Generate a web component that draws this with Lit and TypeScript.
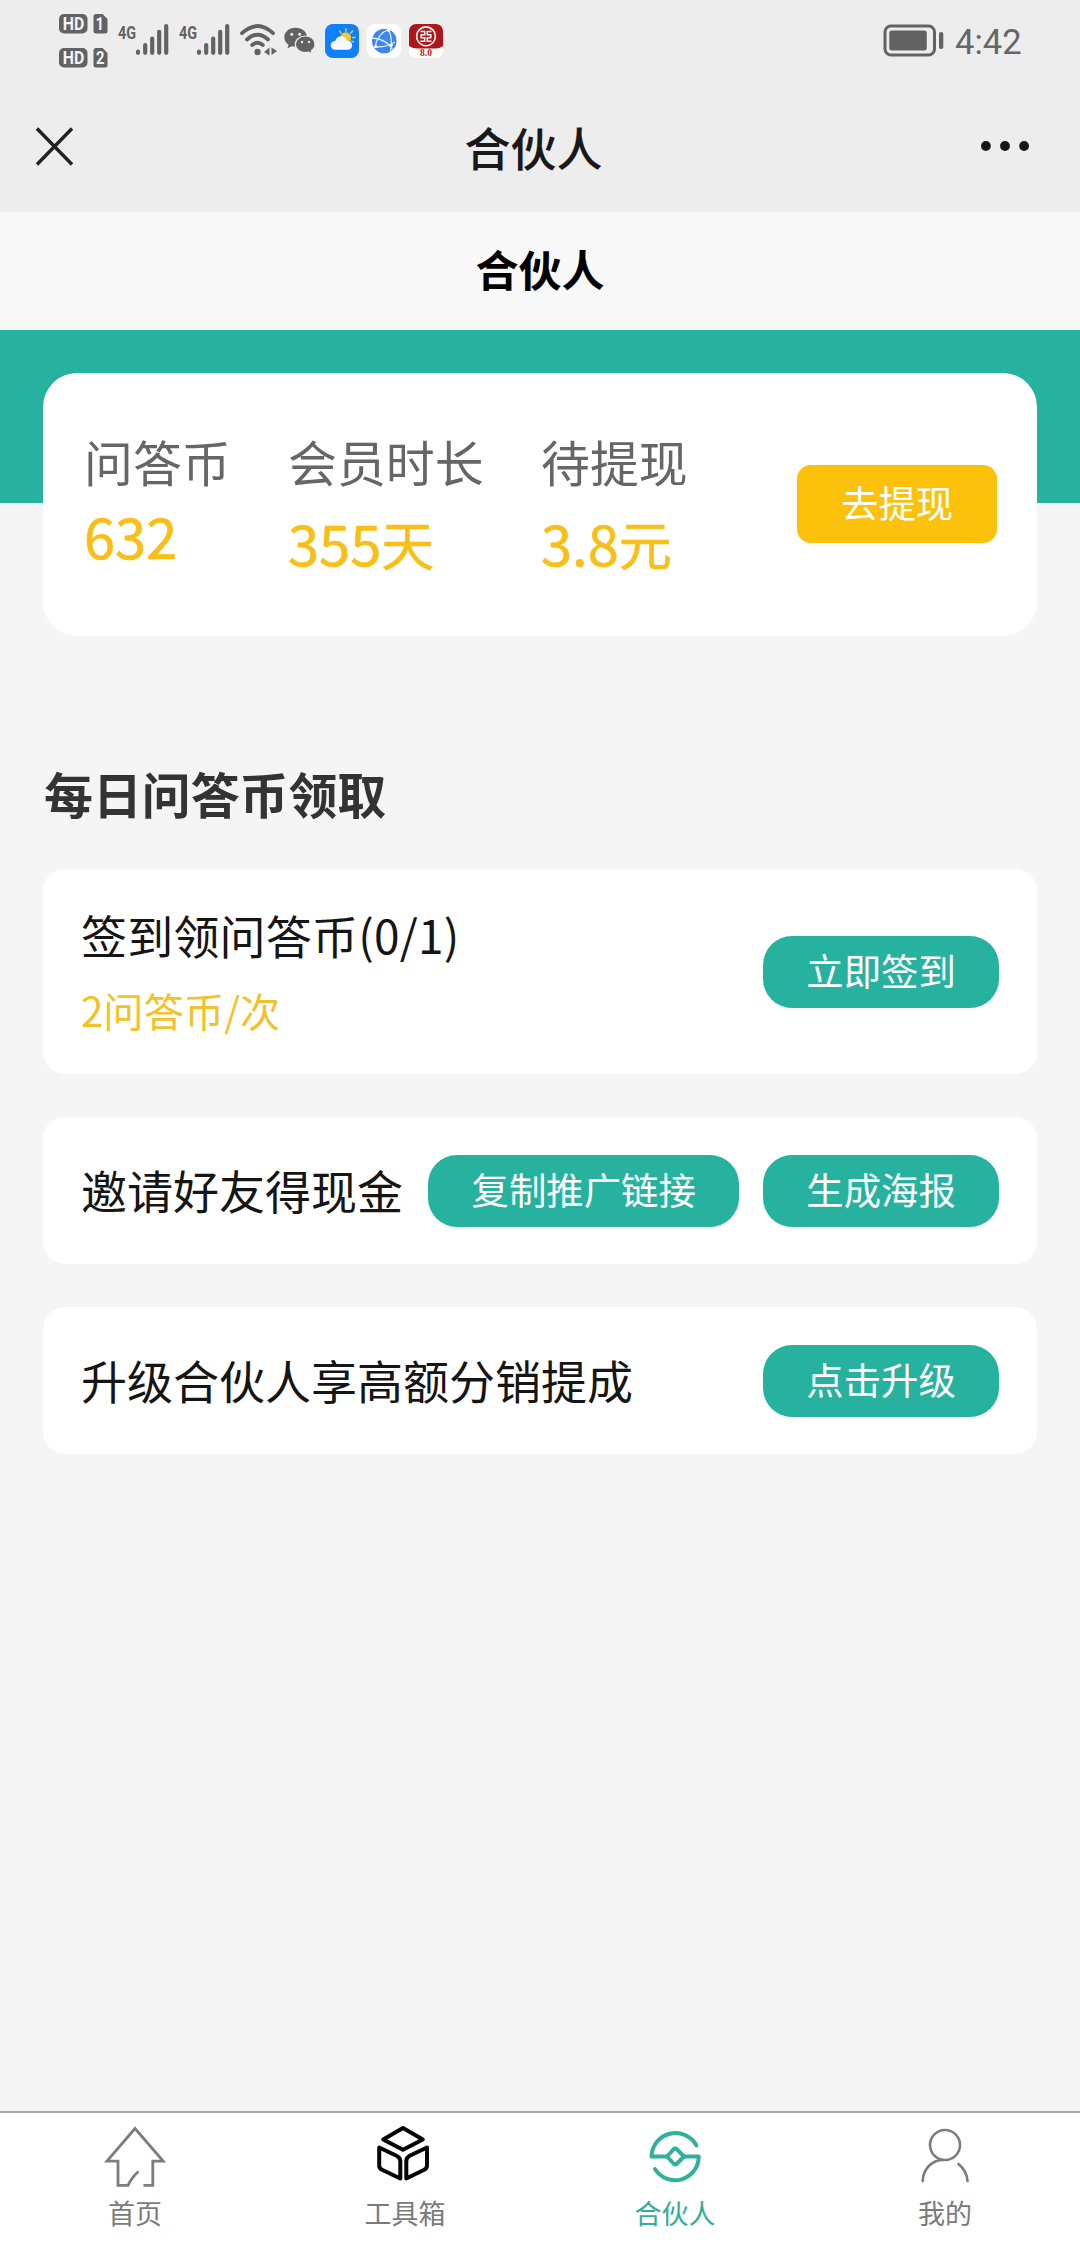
import { LitElement, html, css, svg } from "lit";
import { customElement, property } from "lit/decorators.js";
import { classMap } from "lit/directives/class-map.js";

const signal = () => svg`
  <text class="net" x="0" y="16.500" textLength="18" lengthAdjust="spacingAndGlyphs">4G</text>
  <g class="bars">
    <path d="M20 29.6v1.2M27.2 23v7.8M34.2 16.5v14.3M41.2 9.8v21M48.2 4v26.8" />
  </g>`;

@customElement("status-bar")
export class StatusBar extends LitElement {
  static styles = css`
    :host { display: block; }
    .bar { display: flex; align-items: flex-start; height: 80px; padding: 0 59px; color: #626262; }
    svg { display: block; flex: none; overflow: visible; }
    .hd { width: 49px; margin-top: 14px; }
    .sig { margin-left: 10px; margin-top: 22px; }
    .sig2 { margin-left: 10px; margin-top: 22px; }
    .wifi { margin-left: 9px; margin-top: 22px; }
    .chat { margin-left: 7px; margin-top: 26px; }
    .app { margin-left: 8px; margin-top: 24px; }
    .chat + .app { margin-left: 9px; }
    .battery { margin-left: auto; margin-top: 24px; }
    .time { margin: 17px 0 0 11px; width: 66px; font: 400 34.500px/50px Roboto, sans-serif; color: #666; white-space: nowrap; }
    .net { font: 700 19px Roboto, sans-serif; fill: #626262; }
    .bars path { stroke: #626262; stroke-width: 4.2; stroke-linecap: round; }
    .tag { font: 700 18px Roboto, sans-serif; fill: #f4f4f4; }
    .version { font: 700 9.500px "Liberation Serif", serif; fill: #b3201d; text-anchor: middle; }
  `;
  render() {
    return html`<div class="bar">
      <svg class="hd" width="49" height="54" viewBox="0 0 49 54">
        <rect width="28.5" height="19.5" rx="5" fill="#626262" />
        <text class="tag" x="3.700" y="16.300" textLength="21.500" lengthAdjust="spacingAndGlyphs">HD</text>
        <path d="M37 0h6.5l5 5v12q0 2.5-2.500 2.500h-9q-2.500 0-2.500-2.500v-14.500q0-2.500 2.500-2.500z" fill="#626262" />
        <text class="tag" x="36.500" y="16.300" textLength="8.500" lengthAdjust="spacingAndGlyphs">1</text>
        <rect y="34" width="28.5" height="19.5" rx="5" fill="#626262" />
        <text class="tag" x="3.700" y="50.300" textLength="21.500" lengthAdjust="spacingAndGlyphs">HD</text>
        <path d="M37 34h6.500l5 5v12q0 2.500-2.500 2.500h-9q-2.500 0-2.500-2.500v-14.500q0-2.500 2.500-2.500z" fill="#626262" />
        <text class="tag" x="37" y="50.300" textLength="8.500" lengthAdjust="spacingAndGlyphs">2</text>
      </svg>
      <svg class="sig" width="51" height="36" viewBox="0 0 51 36">${signal()}</svg>
      <svg class="sig2" width="51" height="36" viewBox="0 0 51 36">${signal()}</svg>
      <svg class="wifi" width="38" height="36" viewBox="0 0 38 36" fill="none" stroke="#626262" stroke-width="3.800" stroke-linecap="round">
        <path d="M3 11.200Q18.500-3 34 11.200M8 17.500Q18.500 8 29 17.500M13.200 23Q18.500 18.500 23.800 23" />
        <circle cx="18.500" cy="30" r="3.200" fill="#626262" stroke="none" />
        <path d="M30.500 25.500v8l-5.500-3.500zM32.500 25.500l5.500 3.500-5.500 4z" fill="#626262" stroke="none" />
      </svg>
      <svg class="chat" width="32" height="30" viewBox="0 0 32 30">
        <path d="M11.500 1.800C5 1.800.3 6 .3 11.300c0 3.200 1.700 5.700 4.200 7.400l-1 3.600 4.300-2.100c1.200.300 2.400.500 3.700.500 6.500 0 11.500-4.200 11.500-9.500S18 1.800 11.500 1.800z" fill="#626262" />
        <path d="M21.500 10C15.800 10 11.300 13.700 11.300 18.300s4.500 8.300 10.200 8.300c1.100 0 2.200-.200 3.200-.500l3.500 2-.900-3.200c2.200-1.500 3.700-3.700 3.700-6.600C31 13.700 27.200 10 21.500 10z" fill="#626262" stroke="#ededed" stroke-width="1.200" />
        <g fill="#ededed"><circle cx="7.800" cy="8.300" r="1.500" /><circle cx="15.600" cy="8.300" r="1.500" /><circle cx="18" cy="16" r="1.200" /><circle cx="25" cy="16" r="1.200" /></g>
      </svg>
      <svg class="app" width="34" height="34" viewBox="0 0 34 34">
        <rect width="34" height="34" rx="8" fill="#0f80f8" />
        <path d="M21 4.800v2.400M27.500 7l-1.600 2M14.500 7l1.500 2M30 13.200l-2.300.500M28.500 18l-1.800-1" stroke="#f1cf55" stroke-width="1.400" stroke-linecap="round" />
        <circle cx="20.800" cy="13.500" r="5.300" fill="#fbc52d" />
        <path d="M10.500 25.800c-3 0-4.800-2-4.800-4.500 0-2.700 2.200-4.400 4.500-4.300.700-3 3.200-4.700 6-4.700 3.200 0 5.400 2 6 4.700 3-.300 5 1.700 5 4.300 0 2.500-1.900 4.500-4.700 4.500z" fill="#f6faff" />
      </svg>
      <svg class="app" width="34" height="34" viewBox="0 0 34 34">
        <rect width="34" height="34" rx="8" fill="#fff" />
        <circle cx="17.300" cy="17" r="12.300" fill="#3f86ec" />
        <path d="M21.500 5.500Q11 9 7.500 24M5.300 14Q19 15 26 25.500M21.500 5.500Q26 14 23.500 27.500M7.500 22.500Q17 24.500 28 18" fill="none" stroke="#dcebff" stroke-width="1.300" />
        <g fill="#fff"><circle cx="21.500" cy="6.300" r="1.600" /><circle cx="9" cy="22.500" r="1.600" /><circle cx="24.300" cy="21" r="1.600" /></g>
      </svg>
      <svg class="app" width="34" height="34" viewBox="0 0 34 34">
        <rect width="34" height="34" rx="7" fill="#fff" />
        <path d="M0 22V7a7 7 0 0 1 7-7h20a7 7 0 0 1 7 7v15q-4 3-8 2.500H8Q4 24.500 0 22z" fill="#ad171b" />
        <circle cx="17" cy="12.300" r="9.400" fill="none" stroke="#fff" stroke-width="1.600" />
        <path d="M11.500 7.500h4.200v3.300h-3.500v3h3.500v3.500h-4.200M22.500 7.500h-4.200v3.300h3.500v3h-3.500v3.500h4.200" fill="none" stroke="#fff" stroke-width="1.500" />
        <text class="version" x="17" y="32.300">8.0</text>
      </svg>
      <svg class="battery" width="61" height="33" viewBox="0 0 61 33">
        <rect x="2" y="2" width="49.500" height="29" rx="6" fill="none" stroke="#626262" stroke-width="3" />
        <rect x="6.300" y="6.500" width="37.500" height="20" rx="2.500" fill="#626262" />
        <rect x="56" y="8" width="4.300" height="17" rx="2" fill="#626262" />
      </svg>
      <div class="time">4:42</div>
    </div>`;
  }
}

@customElement("pill-button")
export class PillButton extends LitElement {
  static styles = css`
    :host { display: block; flex: none; }
    .btn {
      box-sizing: border-box; display: block; margin: 0; border: 0; height: 72px; padding: 0 43.2px 3px;
      border-radius: 29px; background: #27b2a0; color: #fff; white-space: nowrap;
      font: 400 37.4px/69px "Noto Sans CJK SC", sans-serif;
    }
    .gold { height: 78px; line-height: 74px; border-radius: 14px; background: #fcc10b; padding: 0 43.800px 4px; }
  `;
  @property() label = "";
  @property({ type: Boolean }) gold = false;
  render() {
    return html`<button class=${classMap({ btn: true, gold: this.gold })}>${this.label}</button>`;
  }
}

interface Task { title: string; note?: string; actions: string[]; }

const tasks: Task[] = [
  { title: "签到领问答币(0/1)", note: "2问答币/次", actions: ["立即签到"] },
  { title: "邀请好友得现金", actions: ["复制推广链接", "生成海报"] },
  { title: "升级合伙人享高额分销提成", actions: ["点击升级"] },
];

const stats = [
  { label: "问答币", value: "632", unit: "" },
  { label: "会员时长", value: "355", unit: "天" },
  { label: "待提现", value: "3.8", unit: "元" },
];

const tabs = [
  {
    label: "首页",
    icon: svg`<g fill="none" stroke="#7d7d7d" stroke-width="2.800"><path d="M48.500 54.300H57.800V30.200H68.200L40 -2.500L12 30.200H23V54.300H33Q37 46 43.500 40.500" /></g>`,
  },
  {
    label: "工具箱",
    icon: svg`<g fill="none" stroke="#050505" stroke-width="4" stroke-linejoin="round">
      <path d="M38 -3L57.800 8.500L38 18.800L18.200 8.500Z" />
      <path d="M14.200 16.500L31.500 24.800Q35.300 26.800 35.300 30V47.500L17 38.800Q14.200 37.300 14.200 34.500Z" />
      <path d="M62 16.500L44.700 24.800Q41.300 26.800 41.300 30V47.500L59.200 38.800Q62 37.300 62 34.500Z" /></g>`,
  },
  {
    label: "合伙人",
    active: true,
    icon: svg`<g fill="none" stroke="#33b09b" stroke-width="4" stroke-linecap="round" stroke-linejoin="round">
      <path d="M61.500 14.500A24 24 0 0 0 16.500 25.500H32L38.500 18.300Q40.300 16.800 42 18.300L49 25.500H63.700A23.600 23.600 0 0 1 20 38" />
      <path d="M32 25.500L38.500 32.500Q40.300 34.200 42 32.500L49 25.500" /></g>`,
  },
  {
    label: "我的",
    icon: svg`<g fill="none" stroke="#7d7d7d" stroke-width="2.600" stroke-linecap="round">
      <circle cx="40" cy="14" r="15" /><path d="M17.700 50C18 38 27 29 38 29M53.500 33Q62 40 62.500 50" /></g>`,
  },
];

@customElement("app-root")
export class AppRoot extends LitElement {
  static styles = css`
    :host { display: block; font-family: "Noto Sans CJK SC", sans-serif; }
    .page { display: flex; flex-direction: column; height: 2244px; background: #f5f5f5; }
    .top { height: 212px; background: #ededed; }
    .nav { display: grid; grid-template-columns: 200px 1fr 200px; align-items: center; height: 132px; color: #191919; }
    .close { display: block; margin: 0 0 0 35px; }
    .more { display: block; margin: 0 51px 0 auto; }
    .nav-title { font-size: 46px; line-height: 66px; font-weight: 500; text-align: center; padding: 0 13px 0 0; }
    .heading { height: 118px; line-height: 113px; background: #f8f8f8; font-size: 43px; font-weight: 700; color: #000; text-align: center; }
    .main { flex: 1; padding: 43px 43px 0; background: linear-gradient(#27b2a0, #27b2a0) top / 100% 173px no-repeat; }
    .wallet { box-sizing: border-box; display: flex; height: 263px; padding: 0 40px 0 41px; border-radius: 34px; background: #fff; }
    .stat { margin-top: 53px; }
    .stat:nth-child(1) { width: 204px; }
    .stat:nth-child(2) { width: 253px; }
    .label { font-size: 48.900px; line-height: 70px; color: #666; }
    .value { display: flex; align-items: baseline; font-weight: 400; color: #f8bf18; font-size: 56px; line-height: 74px; margin-top: 9px; -webkit-text-stroke: 0.600px #f8bf18; }
    .stat:nth-child(1) .value { margin-top: 2px; }
    .unit { font-size: 53px; }
    .withdraw { margin: 92px 0 0 auto; }
    .section { margin: 122px 0 0; padding-left: 1px; font-size: 48.900px; line-height: 70px; font-weight: 700; color: #333; }
    .list { display: flex; flex-direction: column; gap: 43px; margin-top: 41px; }
    .task { box-sizing: border-box; display: flex; align-items: center; height: 147px; padding: 0 38px; border-radius: 22px; background: #fff; }
    .tall { height: 205px; }
    .copy { flex: 1; white-space: nowrap; padding-bottom: 3px; }
    .title { font-size: 46px; line-height: 66px; color: #151515; }
    .tall .title { letter-spacing: 0.200px; }
    .note { font-size: 40.300px; line-height: 58px; color: #f3c22b; margin-top: 14px; }
    .actions { display: flex; gap: 24px; }
    .tabs { box-sizing: border-box; display: grid; grid-template-columns: repeat(4, 1fr); height: 133px; border-top: 2px solid #a9a9a9; background: #fff; }
    .tab { display: flex; flex-direction: column; align-items: center; padding-top: 18px; color: #7a7a7a; font-size: 27px; line-height: 40px; }
    .tab svg { display: block; overflow: visible; margin-bottom: 2px; }
    .active { color: #33ae9b; }
  `;
  render() {
    return html`<div class="page">
      <div class="top">
        <status-bar></status-bar>
        <div class="nav">
          <svg class="close" width="39" height="39" viewBox="0 0 39 39"><path d="M2 1.500L37 37.500M37 1.500L2 37.500" stroke="#222" stroke-width="3.400" /></svg>
          <div class="nav-title">合伙人</div>
          <svg class="more" width="48" height="10" viewBox="0 0 48 10" fill="#151515"><circle cx="4.900" cy="5" r="4.900" /><circle cx="24" cy="5" r="4.900" /><circle cx="43.100" cy="5" r="4.900" /></svg>
        </div>
      </div>
      <div class="heading">合伙人</div>
      <div class="main">
        <div class="wallet">
          ${stats.map((s) => html`<div class="stat">
            <div class="label">${s.label}</div>
            <div class="value"><span>${s.value}</span><span class="unit">${s.unit}</span></div>
          </div>`)}
          <pill-button class="withdraw" gold label="去提现"></pill-button>
        </div>
        <div class="section">每日问答币领取</div>
        <div class="list">
          ${tasks.map((t) => html`<div class=${classMap({ task: true, tall: !!t.note })}>
            <div class="copy">
              <div class="title">${t.title}</div>
              ${t.note ? html`<div class="note">${t.note}</div>` : ""}
            </div>
            <div class="actions">${t.actions.map((a) => html`<pill-button label=${a}></pill-button>`)}</div>
          </div>`)}
        </div>
      </div>
      <div class="tabs">
        ${tabs.map((t) => html`<div class=${classMap({ tab: true, active: !!t.active })}>
          <svg width="80" height="60" viewBox="0 0 80 60">${t.icon}</svg>
          <span>${t.label}</span>
        </div>`)}
      </div>
    </div>`;
  }
}
